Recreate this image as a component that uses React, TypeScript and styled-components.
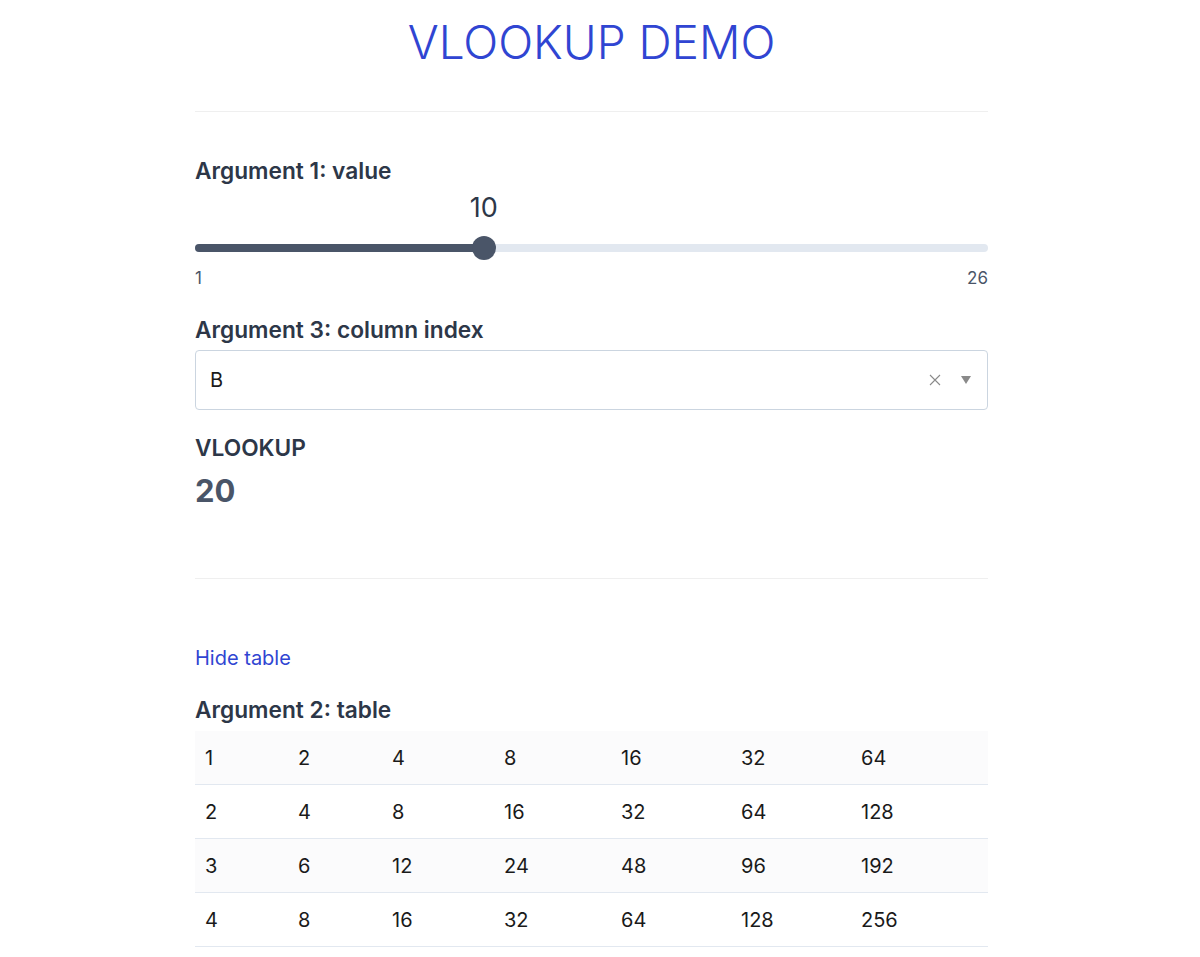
import React, { useState } from 'react';
import styled, { createGlobalStyle } from 'styled-components';

const GlobalStyle = createGlobalStyle`
  html, body {
    margin: 0;
    padding: 0;
    background: #ffffff;
  }
  body {
    font-family: Inter, "Noto Sans", "Liberation Sans", sans-serif;
    padding-right: 17px;
  }
`;

const Page = styled.main`
  max-width: 793px;
  margin: 0 auto;
  padding-top: 12px;
  padding-bottom: 40px;
`;

const Title = styled.h1`
  margin: 0;
  font-size: 46px;
  line-height: 60px;
  font-weight: 300;
  color: #3045d2;
  text-align: center;
`;

const Divider = styled.hr<{ $top: number }>`
  margin: ${p => p.$top}px 0 0;
  border: 0;
  height: 1px;
  background: #efefef;
`;

const Label = styled.div<{ $top: number }>`
  margin-top: ${p => p.$top}px;
  font-size: 22.7px;
  line-height: 24px;
  font-weight: 600;
  color: #2d3748;
`;

const SliderBox = styled.div`
  position: relative;
  margin-top: 10px;
`;

const ValueRow = styled.div`
  position: relative;
  height: 30px;
`;

const CurrentValue = styled.span`
  position: absolute;
  top: 0;
  transform: translateX(-50%);
  font-size: 27px;
  line-height: 30px;
  color: #2d3748;
`;

const TrackArea = styled.div`
  position: relative;
  margin-top: 13px;
  height: 24px;
  display: flex;
  align-items: center;
`;

const Track = styled.div`
  width: 100%;
  height: 8px;
  border-radius: 4px;
  background: #e2e8f0;
  overflow: hidden;
`;

const Fill = styled.div`
  height: 100%;
  background: #4a5568;
`;

const Thumb = styled.div`
  position: absolute;
  top: 0;
  width: 24px;
  height: 24px;
  border-radius: 50%;
  background: #4a5568;
  transform: translateX(-50%);
`;

const Ticks = styled.div`
  margin-top: 8px;
  display: flex;
  justify-content: space-between;
  font-size: 17px;
  line-height: 20px;
  color: #4a5568;
`;

const SelectBox = styled.div`
  margin-top: 8px;
  height: 60px;
  box-sizing: border-box;
  border: 1px solid #cbd5e0;
  border-radius: 4px;
  display: flex;
  align-items: center;
  padding: 0 11px 0 14px;
  background: #fff;
`;

const SelectValue = styled.span`
  flex: 1;
  font-size: 20px;
  color: #1a1a1a;
`;

const IconButton = styled.span<{ $gap?: number }>`
  display: flex;
  align-items: center;
  justify-content: center;
  width: 20px;
  height: 20px;
  margin-left: ${p => p.$gap ?? 0}px;
  color: #8a8a8a;
`;

const Result = styled.div`
  margin-top: 11px;
  font-size: 31px;
  line-height: 40px;
  font-weight: 700;
  color: #4a5568;
`;

const ToggleLink = styled.a`
  display: block;
  margin-top: 67px;
  font-size: 20px;
  line-height: 24px;
  color: #3045d2;
  text-decoration: none;
  cursor: pointer;
`;

const Table = styled.table`
  margin-top: 9px;
  width: 100%;
  border-collapse: collapse;
  table-layout: fixed;
`;

const Row = styled.tr<{ $shade: boolean }>`
  background: ${p => (p.$shade ? '#fbfbfc' : '#ffffff')};
  border-bottom: 1px solid #e2e8f0;
`;

const Cell = styled.td`
  height: 53px;
  padding: 0 0 0 10px;
  font-size: 20px;
  color: #1a1a1a;
  vertical-align: middle;
`;

const colWidths = [93, 94, 112, 117, 120, 120, 137];
const rows = [1, 2, 3, 4].map(n => colWidths.map((_, i) => n * 2 ** i));

export default function App() {
  const [value] = useState(10);
  const [showTable, setShowTable] = useState(true);
  const min = 1;
  const max = 26;
  const ratio = (value - min) / (max - min);
  const thumbLeft = `calc(12px + ${ratio} * (100% - 24px))`;

  return (
    <>
      <GlobalStyle />
      <Page>
        <Title>VLOOKUP DEMO</Title>
        <Divider $top={39} />

        <Label $top={47}>Argument 1: value</Label>
        <SliderBox>
          <ValueRow>
            <CurrentValue style={{ left: thumbLeft }}>{value}</CurrentValue>
          </ValueRow>
          <TrackArea>
            <Track>
              <Fill style={{ width: thumbLeft }} />
            </Track>
            <Thumb style={{ left: thumbLeft }} />
          </TrackArea>
          <Ticks>
            <span>{min}</span>
            <span>{max}</span>
          </Ticks>
        </SliderBox>

        <Label $top={30}>Argument 3: column index</Label>
        <SelectBox>
          <SelectValue>B</SelectValue>
          <IconButton>
            <svg width="12" height="12" viewBox="0 0 12 12">
              <path d="M1 1L11 11M11 1L1 11" stroke="currentColor" strokeWidth="1.1" fill="none" />
            </svg>
          </IconButton>
          <IconButton $gap={11}>
            <svg width="10" height="8" viewBox="0 0 10 8">
              <path d="M0 0H10L5 8Z" fill="currentColor" />
            </svg>
          </IconButton>
        </SelectBox>

        <Label $top={26}>VLOOKUP</Label>
        <Result>20</Result>
        <Divider $top={67} />

        <ToggleLink onClick={() => setShowTable(s => !s)}>
          {showTable ? 'Hide table' : 'Show table'}
        </ToggleLink>
        {showTable && (
          <>
            <Label $top={28}>Argument 2: table</Label>
            <Table>
              <colgroup>
                {colWidths.map((w, i) => (
                  <col key={i} style={{ width: w }} />
                ))}
              </colgroup>
              <tbody>
                {rows.map((r, ri) => (
                  <Row key={ri} $shade={ri % 2 === 0}>
                    {r.map((c, ci) => (
                      <Cell key={ci}>{c}</Cell>
                    ))}
                  </Row>
                ))}
              </tbody>
            </Table>
          </>
        )}
      </Page>
    </>
  );
}
